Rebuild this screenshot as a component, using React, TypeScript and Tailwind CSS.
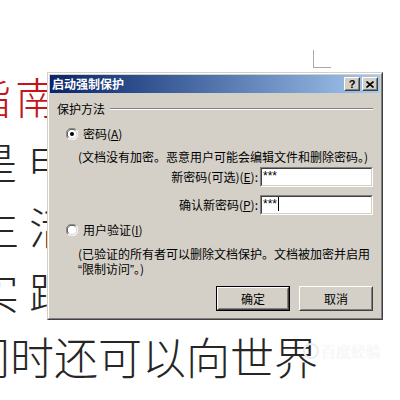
import React from "react";

const cjk = "font-['Noto_Sans_CJK_SC','Noto_Sans_CJK_SC',sans-serif]";

function Radio({ checked }: { checked?: boolean }) {
  return (
    <svg width="12" height="12" viewBox="0 0 12 12" className="shrink-0">
      <circle cx="6" cy="6" r="5.5" fill="#ffffff" />
      <path d="M10.2 1.8 A5.5 5.5 0 0 0 1.8 10.2" fill="none" stroke="#808080" strokeWidth="1" />
      <path d="M9.4 2.6 A4.5 4.5 0 0 0 2.6 9.4" fill="none" stroke="#404040" strokeWidth="1" />
      <path d="M1.8 10.2 A5.5 5.5 0 0 0 10.2 1.8" fill="none" stroke="#ffffff" strokeWidth="1" />
      <path d="M2.6 9.4 A4.5 4.5 0 0 0 9.4 2.6" fill="none" stroke="#d4d0c8" strokeWidth="1" />
      {checked && <circle cx="6" cy="6" r="2" fill="#000000" />}
    </svg>
  );
}

function Field({ caret }: { caret?: boolean }) {
  return (
    <div className="w-[113px] h-[20px] border border-t-[#808080] border-l-[#808080] border-r-white border-b-white">
      <div className="h-full border border-t-[#404040] border-l-[#404040] border-r-[#d4d0c8] border-b-[#d4d0c8] bg-white flex items-start pl-[1px]">
        <span className="text-[12px] leading-[12px] text-black font-['Liberation_Sans',sans-serif] mt-[1px]">***</span>
        {caret && <span className="w-px h-[14px] bg-black ml-[1px]" />}
      </div>
    </div>
  );
}

function Button({ label, isDefault }: { label: string; isDefault?: boolean }) {
  const inner = (
    <div className="h-full border border-t-white border-l-white border-r-[#404040] border-b-[#404040]">
      <div className="h-full border border-t-[#d4d0c8] border-l-[#d4d0c8] border-r-[#808080] border-b-[#808080] flex items-center justify-center text-[12px] text-black">
        {label}
      </div>
    </div>
  );
  return isDefault ? (
    <div className="w-[74px] h-[25px] border border-black">{inner}</div>
  ) : (
    <div className="w-[74px] h-[25px]">{inner}</div>
  );
}

function TitleBtn({ children }: { children: React.ReactNode }) {
  return (
    <div className="w-[16px] h-[14px] bg-[#d4d0c8] border border-t-white border-l-white border-r-[#404040] border-b-[#404040]">
      <div className="h-full border border-t-[#d4d0c8] border-l-[#d4d0c8] border-r-[#808080] border-b-[#808080] flex items-center justify-center">
        {children}
      </div>
    </div>
  );
}

export default function App() {
  return (
    <div className={`relative w-[400px] h-[400px] overflow-hidden bg-white ${cjk}`}>
      {/* document text behind */}
      <div className="pt-[64px] text-[44px] leading-[65px] font-light text-[#262626] whitespace-nowrap">
        <div className="-ml-[33px] tracking-[4px] text-[#c3161c]">指南</div>
        <div className="-ml-[27px] tracking-[10px]">是电</div>
        <div className="-ml-[25px] tracking-[10px]">生活</div>
        <div className="-ml-[25px] tracking-[10px]">实践</div>
        <div className="-ml-[34px]">同时还可以向世界</div>
      </div>

      {/* page corner mark */}
      <div className="absolute left-[313px] top-[50px] w-[18px] h-[18px] border-l border-b border-[#a8a8a8]" />

      {/* faint watermark */}
      <div className="absolute left-[303px] top-[340px] flex items-center gap-[2px] text-[15px] text-white/80 [text-shadow:0_0_1px_#e0e0e0]">
        <span className="w-[16px] h-[16px] rounded-full border-2 border-[#ececec]" />
        <span>百度经验</span>
      </div>

      {/* dialog */}
      <div className="absolute left-[47px] top-[72px] w-[336px] h-[248px] bg-[#d4d0c8] border border-t-[#d4d0c8] border-l-[#d4d0c8] border-r-[#404040] border-b-[#404040]">
        <div className="h-full border border-t-white border-l-white border-r-[#808080] border-b-[#808080] p-px flex flex-col">
          {/* title bar */}
          <div className="h-[18px] shrink-0 flex items-center pl-[2px] pr-[2px] bg-gradient-to-r from-[#0a246a] to-[#a6caf0]">
            <span className="text-white font-bold text-[12px] leading-[12px] flex-1">启动强制保护</span>
            <div className="flex gap-[2px]">
              <TitleBtn>
                <span className="text-[11px] leading-[11px] font-bold text-black font-['Liberation_Sans',sans-serif]">?</span>
              </TitleBtn>
              <TitleBtn>
                <svg width="8" height="7" viewBox="0 0 8 7">
                  <path d="M0.5 0.5 L7.5 6.5 M7.5 0.5 L0.5 6.5" stroke="#000" strokeWidth="1.6" />
                </svg>
              </TitleBtn>
            </div>
          </div>

          {/* body */}
          <div className="flex flex-col px-[7px] text-[12px] text-black">
            <div className="h-[32px] flex items-center">
              <span className="leading-[14px]">保护方法</span>
              <div className="flex-1 ml-[5px] border-t border-b border-t-[#808080] border-b-white" />
            </div>

            <div className="h-[18px] flex items-center pl-[9px] gap-[5px]">
              <Radio checked />
              <span className="leading-[14px]">
                密码(<span className="underline">A</span>)
              </span>
            </div>

            <div className="mt-[7px] h-[14px] leading-[14px] pl-[21px] whitespace-nowrap">
              (文档没有加密。恶意用户可能会编辑文件和删除密码。)
            </div>

            <div className="mt-[3px] flex items-center gap-[2px]">
              <span className="w-[201px] text-right leading-[14px] whitespace-nowrap">
                新密码(可选)(<span className="underline">E</span>):
              </span>
              <Field />
            </div>

            <div className="mt-[8px] flex items-center gap-[2px]">
              <span className="w-[201px] text-right leading-[14px] whitespace-nowrap">
                确认新密码(<span className="underline">P</span>):
              </span>
              <Field caret />
            </div>

            <div className="mt-[6px] h-[18px] flex items-center pl-[9px] gap-[5px]">
              <Radio />
              <span className="leading-[14px]">
                用户验证(<span className="underline">I</span>)
              </span>
            </div>

            <div className="mt-[7px] leading-[15px] pl-[21px] whitespace-nowrap">
              <div>(已验证的所有者可以删除文档保护。文档被加密并启用</div>
              <div>
                <span className="font-['Liberation_Sans',sans-serif]">“</span>限制访问<span className="font-['Liberation_Sans',sans-serif]">”</span>。)
              </div>
            </div>

            <div className="mt-[8px] flex justify-end gap-[9px]">
              <Button label="确定" isDefault />
              <Button label="取消" />
            </div>
          </div>
        </div>
      </div>
    </div>
  );
}
